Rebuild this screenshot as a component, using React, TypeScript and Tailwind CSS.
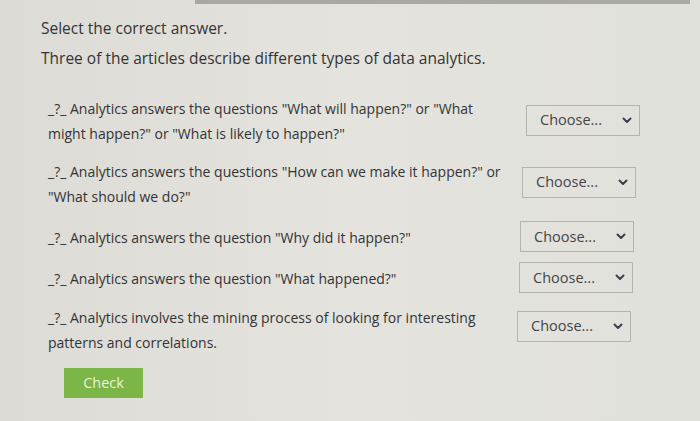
import React from "react";

function Chevron() {
  return (
    <svg width="10" height="7" viewBox="0 0 10 7" className="shrink-0">
      <path d="M1.5 1.5 L5 5 L8.5 1.5" fill="none" stroke="#3d4048" strokeWidth="2" strokeLinecap="round" strokeLinejoin="round" />
    </svg>
  );
}

function Select({ cls }: { cls: string }) {
  return (
    <div className={"-my-[3px] flex h-[31px] w-[114px] shrink-0 items-center justify-between border border-[#b4b4ac] pl-[13px] pr-[7px] text-[14.5px] text-[#434549] " + cls}>
      <span>Choose...</span>
      <Chevron />
    </div>
  );
}

function Row({ lines, cls, sel }: { lines: string[]; cls: string; sel: string }) {
  return (
    <div className={"flex items-center " + cls}>
      <div className="w-[474px] shrink-0 leading-[25px]">
        {lines.map((l, i) => (
          <div key={i}>{l}</div>
        ))}
      </div>
      <Select cls={sel} />
    </div>
  );
}

export default function App() {
  return (
    <div
      className="relative h-[421px] w-[700px] overflow-hidden bg-gradient-to-r from-[#dcdbd5] via-[#e4e3dd] to-[#e1e1dc] text-[#333436]"
      style={{ fontFamily: '"Open Sans", "Noto Sans", sans-serif' }}
    >
      <div className="absolute left-[195px] top-0 h-[4px] w-[495px] bg-[#a8a8a4]" />
      <div className="flex flex-col pt-[15px]">
        <div className="pl-[41px] text-[15.5px] leading-[26px]">
          <div>Select the correct answer.</div>
          <div className="mt-[4px]">Three of the articles describe different types of data analytics.</div>
        </div>
        <div className="mt-[25px] flex flex-col pl-[48px] text-[14px]">
          <Row
            cls=""
            sel="ml-[4px] -translate-y-[1px]"
            lines={['_?_ Analytics answers the questions "What will happen?" or "What', 'might happen?" or "What is likely to happen?"']}
          />
          <Row
            cls="mt-[13px]"
            sel="ml-[0px] -translate-y-[2px]"
            lines={['_?_ Analytics answers the questions "How can we make it happen?" or', '"What should we do?"']}
          />
          <Row cls="mt-[16px]" sel="-ml-[2px] -translate-y-[1px]" lines={['_?_ Analytics answers the question "Why did it happen?"']} />
          <Row cls="mt-[16px]" sel="-ml-[3px] -translate-y-[1px]" lines={['_?_ Analytics answers the question "What happened?"']} />
          <Row
            cls="mt-[14px]"
            sel="-ml-[5px] -translate-y-[4px]"
            lines={['_?_ Analytics involves the mining process of looking for interesting', "patterns and correlations."]}
          />
          <div className="ml-[16px] mt-[13px] flex h-[30px] w-[79px] items-center justify-center bg-[#7cb646] text-[14.5px] text-[#e8f2dc]">
            Check
          </div>
        </div>
      </div>
    </div>
  );
}
